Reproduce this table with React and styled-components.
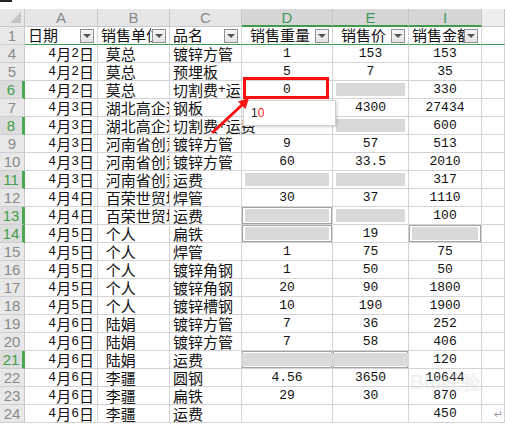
import React from 'react';
import styled, { createGlobalStyle } from 'styled-components';

const Global = createGlobalStyle`
  html, body { margin: 0; padding: 0; background: #fff; }
  body { width: 505px; height: 425px; overflow: hidden; }
`;

const Stage = styled.div`
  position: relative;
  width: 505px;
  height: 425px;
  overflow: hidden;
`;

// thin strip above the column letters
const TopStrip = styled.div`
  height: 9px;
  position: relative;
  &::before {
    content: '';
    position: absolute;
    left: 0;
    top: 0;
    width: 12px;
    height: 2px;
    background: #222;
  }
`;

const Sheet = styled.div`
  display: grid;
  grid-template-columns: 25px 73px 72px 72px 91px 76px 73px 1fr;
  grid-auto-rows: 18px;
`;

const Corner = styled.div`
  box-sizing: border-box;
  background: #e6e6e6;
  border-right: 1px solid #c8c8c8;
  border-bottom: 1px solid #c8c8c8;
  position: relative;
  &::after {
    content: '';
    position: absolute;
    right: 3px;
    bottom: 3px;
    border-left: 11px solid transparent;
    border-bottom: 11px solid #c4c4c4;
  }
`;

const ColHead = styled.div`
  box-sizing: border-box;
  background: ${p => (p.$on ? '#d6d6d6' : p.$blank ? '#eeeeee' : '#e6e6e6')};
  border-right: 1px solid #c8c8c8;
  border-bottom: ${p => (p.$on ? '2px solid #3f9c4e' : '1px solid #c8c8c8')};
  display: flex;
  align-items: center;
  justify-content: center;
  font: 15px "Liberation Sans", Arial, sans-serif;
  color: ${p => (p.$on ? '#3f9a58' : '#8a8a8a')};
`;

const RowHead = styled.div`
  box-sizing: border-box;
  background: ${p => (p.$on ? '#dcdcdc' : '#e8e8e8')};
  border-bottom: 1px solid #cfcfcf;
  border-right: ${p => (p.$on ? '3px solid #47a84f' : '1px solid #c8c8c8')};
  display: flex;
  align-items: center;
  justify-content: center;
  font: 15px "Liberation Sans", Arial, sans-serif;
  color: ${p => (p.$on ? '#3e9e48' : '#8a8a8a')};
`;

const Cell = styled.div`
  box-sizing: border-box;
  border-right: 1px solid #d4d4d4;
  border-bottom: ${p => (p.$line ? '1px solid #3f9c4e' : '1px solid #d4d4d4')};
  display: flex;
  align-items: center;
  justify-content: ${p =>
    p.$align === 'right' ? 'flex-end' : p.$align === 'center' ? 'center' : 'flex-start'};
  padding: 0 ${p => (p.$tight ? 0 : 3)}px;
  overflow: ${p => (p.$spill ? 'visible' : 'hidden')};
  white-space: nowrap;
  font: 13px "Liberation Mono", "Courier New", monospace;
  color: #111;
  box-shadow: ${p => (p.$frame ? 'inset 0 0 0 1px #a3a3a3' : 'none')};
`;

const Han = styled.span`
  font-family: "Noto Sans CJK SC", sans-serif;
  font-size: 15px;
  line-height: 1;
`;

const Mask = styled.div`
  align-self: stretch;
  flex: 1;
  margin: 2px ${p => (p.$wide ? -3 : 0)}px;
  background: #d9d9d9;
`;

const HeadLabel = styled.span`
  flex: 1;
  min-width: 0;
  overflow: hidden;
  text-align: ${p => (p.$center ? 'center' : 'left')};
`;

const FilterBtn = styled.span`
  box-sizing: border-box;
  flex-shrink: 0;
  width: 14px;
  height: 14px;
  border: 1px solid #8f8f8f;
  background: linear-gradient(#f7f7f7, #e2e2e2);
  display: flex;
  align-items: center;
  justify-content: center;
  &::after {
    content: '';
    border-left: 4px solid transparent;
    border-right: 4px solid transparent;
    border-top: 4px solid #555;
  }
`;

const RedBox = styled.div`
  position: absolute;
  left: 243px;
  top: 77px;
  width: 86px;
  height: 22px;
  box-sizing: border-box;
  border: 3px solid #ff1010;
`;

const Popup = styled.div`
  position: absolute;
  left: 243px;
  top: 100px;
  width: 93px;
  height: 26px;
  box-sizing: border-box;
  background: #fff;
  border: 1px solid #cfcfcf;
  box-shadow: 1px 1px 3px rgba(0, 0, 0, 0.18);
  padding: 5px 0 0 7px;
  font: 12px "Liberation Sans", Arial, sans-serif;
  color: #222;
`;

const Red = styled.span`
  color: #ff2020;
`;

const Arrow = styled.svg`
  position: absolute;
  left: 0;
  top: 0;
  pointer-events: none;
`;

const Mark = styled.div`
  position: absolute;
  left: 494px;
  top: 408px;
  font: 11px "DejaVu Sans", sans-serif;
  color: #9a9a9a;
`;

// faint site watermark over the bottom right cells
const Watermark = styled.div`
  position: absolute;
  left: 410px;
  top: 372px;
  font: bold 20px "Liberation Sans", Arial, sans-serif;
  color: rgba(200, 200, 200, 0.25);
  line-height: 1;
  pointer-events: none;
`;

function txt(s) {
  return s.split(/([\u4e00-\u9fff]+)/).map((part, k) =>
    /[\u4e00-\u9fff]/.test(part) ? <Han key={k}>{part}</Han> : part
  );
}

const cols = [
  { letter: 'A' },
  { letter: 'B' },
  { letter: 'C' },
  { letter: 'D', on: true },
  { letter: 'E', on: true },
  { letter: 'I', on: true },
];

const head = [
  { label: '日期' },
  { label: '销售单位' },
  { label: '品名' },
  { label: '销售重量', center: true },
  { label: '销售价', center: true },
  { label: '销售金额', center: true },
];

// '#' grey block, '#f' framed grey block, '=' full-width grey block
const rows = [
  ['4', 0, '4月2日', '莫总', '镀锌方管', '1', '153', '153'],
  ['5', 0, '4月2日', '莫总', '预埋板', '5', '7', '35'],
  ['6', 1, '4月2日', '莫总', '切割费+运费', '0', '#', '330'],
  ['7', 0, '4月3日', '湖北高企达', '钢板', '', '4300', '27434'],
  ['8', 1, '4月3日', '湖北高企达', '切割费+运费>', '', '#', '600'],
  ['9', 0, '4月3日', '河南省创意', '镀锌方管', '9', '57', '513'],
  ['10', 0, '4月3日', '河南省创意', '镀锌方管', '60', '33.5', '2010'],
  ['11', 1, '4月3日', '河南省创意', '运费', '#', '#', '317'],
  ['12', 0, '4月4日', '百荣世贸城', '焊管', '30', '37', '1110'],
  ['13', 1, '4月4日', '百荣世贸城', '运费', '#f', '#', '100'],
  ['14', 1, '4月5日', '个人', '扁铁', '#f', '19', '#f'],
  ['15', 0, '4月5日', '个人', '焊管', '1', '75', '75'],
  ['16', 0, '4月5日', '个人', '镀锌角钢', '1', '50', '50'],
  ['17', 0, '4月5日', '个人', '镀锌角钢', '20', '90', '1800'],
  ['18', 0, '4月5日', '个人', '镀锌槽钢', '10', '190', '1900'],
  ['19', 0, '4月6日', '陆娟', '镀锌方管', '7', '36', '252'],
  ['20', 0, '4月6日', '陆娟', '镀锌方管', '7', '58', '406'],
  ['21', 1, '4月6日', '陆娟', '运费', '=', '=', '120'],
  ['22', 0, '4月6日', '李疆', '圆钢', '4.56', '3650', '10644'],
  ['23', 0, '4月6日', '李疆', '扁铁', '29', '30', '870'],
  ['24', 0, '4月6日', '李疆', '运费', '', '', '450'],
];

function NumCell({ v }) {
  if (v === '#') return <Cell><Mask /></Cell>;
  if (v === '#f') return <Cell $frame><Mask /></Cell>;
  if (v === '=') return <Cell $frame><Mask $wide /></Cell>;
  return <Cell $align="center">{v}</Cell>;
}

export default function App() {
  return (
    <Stage>
      <Global />
      <TopStrip />
      <Sheet>
        <Corner />
        {cols.map(c => (
          <ColHead key={c.letter} $on={c.on}>{c.letter}</ColHead>
        ))}
        <ColHead $blank />

        <RowHead>1</RowHead>
        {head.map(h => (
          <Cell key={h.label} $line>
            <HeadLabel $center={h.center}>{txt(h.label)}</HeadLabel>
            <FilterBtn />
          </Cell>
        ))}
        <Cell $line />

        {rows.map(([n, on, a, b, c, d, e, i]) => {
          const spill = c.endsWith('>');
          return (
            <React.Fragment key={n}>
              <RowHead $on={on}>{n}</RowHead>
              <Cell $align="right">{txt(a)}</Cell>
              <Cell $tight>&nbsp;{txt(b)}</Cell>
              <Cell $spill={spill}>{txt(spill ? c.slice(0, -1) : c)}</Cell>
              <NumCell v={d} />
              <NumCell v={e} />
              <NumCell v={i} />
              <Cell />
            </React.Fragment>
          );
        })}
      </Sheet>

      <RedBox />
      <Popup>
        1<Red>0</Red>
      </Popup>
      <Arrow width="505" height="425">
        <line x1="212" y1="133" x2="243" y2="104" stroke="#ff1010" strokeWidth="3" />
        <polygon points="249,98 245.5,109 238,101.5" fill="#ff1010" />
      </Arrow>
      <Watermark>Bai经验</Watermark>
      <Mark>↵</Mark>
    </Stage>
  );
}
